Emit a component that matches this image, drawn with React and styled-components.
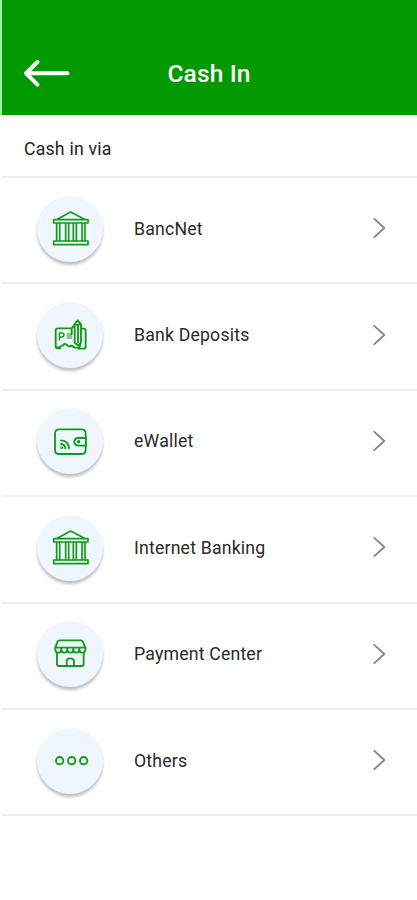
import React from "react";
import styled, { createGlobalStyle } from "styled-components";

const GlobalStyle = createGlobalStyle`
  *, *::before, *::after { box-sizing: border-box; }
  body { margin: 0; background: #fff; font-family: Roboto, "Liberation Sans", sans-serif; }
`;

const Screen = styled.main`
  width: 100%;
  max-width: 417px;
  min-height: 900px;
  padding-left: 2px;
  background: #fff;
  color: #2a2a2a;
`;

const Header = styled.header`
  display: grid;
  grid-template-columns: 70px 1fr 70px;
  align-items: center;
  height: 114.7px;
  margin-left: -2px;
  padding-top: 33px;
  border-left: 2px solid #a0f5a0;
  background: #009900;
  color: #fff;
`;

const BackButton = styled.button`
  display: flex;
  width: 50px;
  height: 30px;
  margin: 0 0 0 21px;
  padding: 0;
  border: 0;
  background: none;
  color: inherit;
`;

const Title = styled.h1`
  margin: 0;
  padding-right: 1px;
  font-size: 24.6px;
  font-weight: 500;
  line-height: 30px;
  text-align: center;
  letter-spacing: 0.1px;
`;

const SectionLabel = styled.h2`
  height: 63.3px;
  margin: 0;
  padding: 0 22px;
  border-bottom: 2px solid #eeeeee;
  color: #222;
  font-size: 17.7px;
  font-weight: 400;
  line-height: 69px;
  letter-spacing: 0.2px;
`;

const List = styled.ul`
  margin: 0;
  padding: 0;
  list-style: none;
`;

const Row = styled.li`
  display: grid;
  grid-template-columns: 66px 1fr 16px;
  align-items: center;
  height: 106.4px;
  padding: 0 30px 3px 35px;
  border-bottom: 2px solid #eeeeee;
`;

const IconDisc = styled.span`
  display: block;
  width: 66px;
  height: 66px;
  border-radius: 50%;
  background: #f0f6ff;
  box-shadow: 0 3px 3px rgba(0, 0, 0, 0.25);
`;

const Glyph = styled.svg`
  display: block;
  width: 100%;
  height: 100%;
  fill: none;
  stroke: ${(p) => p.$color || "#129b18"};
  stroke-width: ${(p) => p.$weight || 5.6};
  stroke-linecap: round;
  stroke-linejoin: round;
`;

const RowLabel = styled.span`
  padding-left: 31px;
  font-size: 17.7px;
  line-height: 24px;
  letter-spacing: 0.18px;
  white-space: nowrap;
`;

const Chevron = styled(Glyph)`
  width: 16px;
  height: 24px;
  margin-top: -1px;
`;

const DISC_BOX = "20 17 198 198";

const BankIcon = () => (
  <Glyph viewBox={DISC_BOX} $weight={5}>
    <path d="M78 88 L121 65 L165 88 M70 88H173V98H70Z M70 152H173V163H70Z" />
    <path d="M79 99V151 M88 99V151 M106 99V151 M115 99V151 M129 99V151 M138 99V151 M155 99V151 M164 99V151" />
  </Glyph>
);

const DepositIcon = () => (
  <Glyph viewBox={DISC_BOX}>
    <path d="M122 96H82Q76 96 76 102V150Q76 156 82 156H90M154 97H160Q166 97 166 103V151Q166 157 160 157H144" />
    <path d="M77 153L87 153L104 142L117 151L123 148L134 154H145Q151 151 149 142" />
    <path d="M87 131V110H94Q101 110 101 116Q101 122 94 122H87" strokeWidth="4" />
    <path d="M110 113H124M110 119H124M110 125H124" strokeWidth="3" />
    <path d="M133 139V83L142 72L152 84V139L143 147Z M134 85H151M143 85V138 M133 84L124 96V114" />
  </Glyph>
);

const WalletIcon = () => (
  <Glyph viewBox={DISC_BOX}>
    <path d="M166 105V94Q166 81 153 81H87Q74 81 74 94V142Q74 155 87 155H153Q166 155 166 142V132" />
    <path d="M167 107H145Q132 107 132 118.5Q132 130 145 130H167Z" />
    <circle cx="145" cy="118.5" r="2.5" />
    <path d="M92 114Q115 115 116 138M92 125Q104 126 105 138" />
    <circle cx="94" cy="136" r="1.5" />
  </Glyph>
);

const StoreIcon = () => (
  <Glyph viewBox={DISC_BOX}>
    <path d="M75 97L81 80Q83 75 88 75H151Q156 75 158 80L165 97Z" />
    <path d="M75 98V104Q75 112 84 112Q93 112 93 104Q93 112 102 112Q111 112 111 104Q111 112 120 112Q129 112 129 104Q129 112 138 112Q147 112 147 104Q147 112 156 112Q165 112 165 104V98" />
    <path d="M93 98V105M111 98V105M129 98V105M147 98V105" />
    <path d="M80 113V146Q80 152 86 152H154Q160 152 160 146V113" />
    <path d="M109 151V138Q109 129 120 129Q131 129 131 138V151" />
  </Glyph>
);

const DotsIcon = () => (
  <Glyph viewBox={DISC_BOX}>
    <circle cx="88" cy="115" r="11" />
    <circle cx="124" cy="115" r="11" />
    <circle cx="160" cy="115" r="11" />
  </Glyph>
);

const METHODS = [
  { label: "BancNet", Icon: BankIcon },
  { label: "Bank Deposits", Icon: DepositIcon },
  { label: "eWallet", Icon: WalletIcon },
  { label: "Internet Banking", Icon: BankIcon },
  { label: "Payment Center", Icon: StoreIcon },
  { label: "Others", Icon: DotsIcon },
];

export default function App() {
  return (
    <>
      <GlobalStyle />
      <Screen>
        <Header>
          <BackButton aria-label="Back">
            <Glyph viewBox="0 0 50 30" $color="#fff" $weight={4}>
              <path d="M44.5 14.3H3M14.5 3L3 14.3L14.5 25.7" />
            </Glyph>
          </BackButton>
          <Title>Cash In</Title>
        </Header>
        <SectionLabel>Cash in via</SectionLabel>
        <List>
          {METHODS.map(({ label, Icon }) => (
            <Row key={label}>
              <IconDisc>
                <Icon />
              </IconDisc>
              <RowLabel>{label}</RowLabel>
              <Chevron viewBox="0 0 16 24" $color="#858585" $weight={1.8}>
                <path d="M3.3 2.8L13.3 12L3.3 21.2" />
              </Chevron>
            </Row>
          ))}
        </List>
      </Screen>
    </>
  );
}
